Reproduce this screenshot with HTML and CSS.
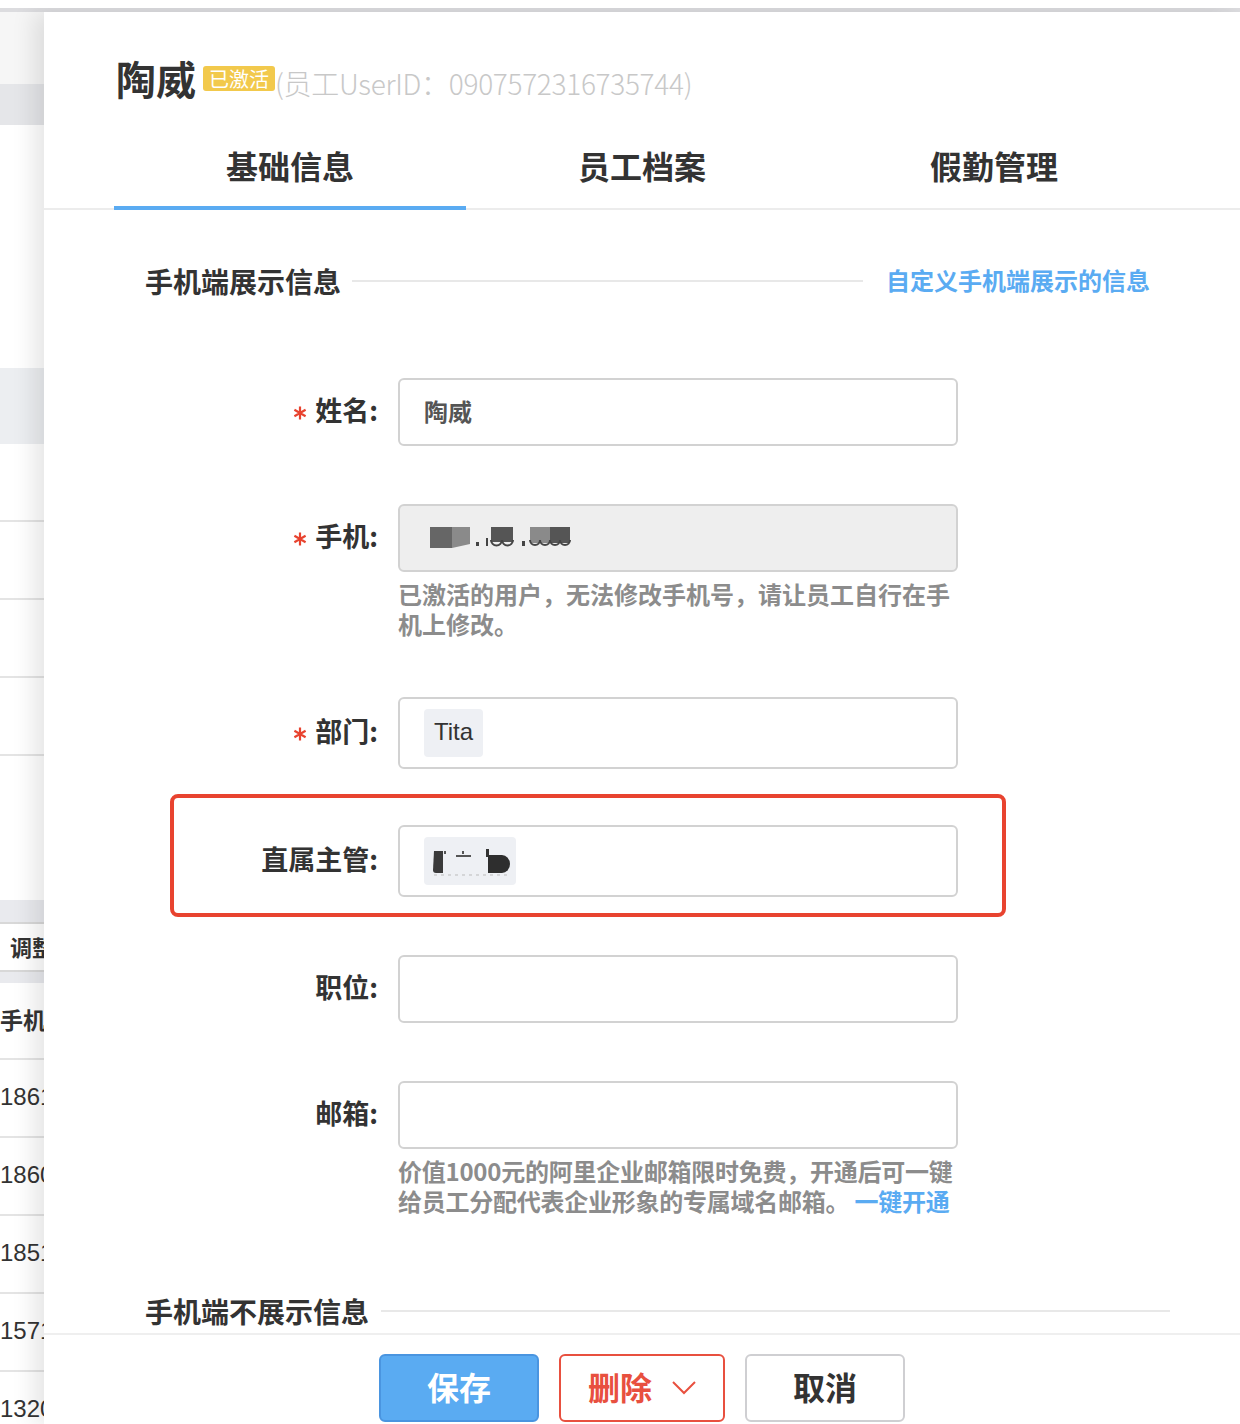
FILE: index.html
```html
<!DOCTYPE html>
<html lang="zh-CN">
<head>
<meta charset="utf-8">
<title>员工信息</title>
<link rel="stylesheet" href="styles.css">
</head>
<body>
<div class="topline"></div>
<div class="screen">
  <aside class="bg-list">
    <div class="l-top"></div>
    <div class="l-head"></div>
    <div class="l-space1"></div>
    <div class="l-sel"></div>
    <div class="l-row"></div>
    <div class="l-row"></div>
    <div class="l-row"></div>
    <div class="l-row"></div>
    <div class="l-space2"></div>
    <div class="l-band"></div>
    <div class="l-btnrow"><span class="l-btn">调整</span></div>
    <div class="l-band l-band--short"></div>
    <div class="l-row l-row--head">手机号码</div>
    <div class="l-row l-row--num">18612345678</div>
    <div class="l-row l-row--num">18600000000</div>
    <div class="l-row l-row--num">18512345678</div>
    <div class="l-row l-row--num">15712345678</div>
    <div class="l-row l-row--num">13200000000</div>
  </aside>

  <section class="panel">
    <header class="panel-head">
      <h1 class="emp-name">陶威</h1>
      <span class="badge">已激活</span>
      <span class="uid">(员工UserID：0907572316735744)</span>
    </header>

    <nav class="tabs">
      <div class="tab tab--active">基础信息</div>
      <div class="tab">员工档案</div>
      <div class="tab">假勤管理</div>
    </nav>

    <div class="panel-body">
      <div class="sec-head">
        <span class="sec-title">手机端展示信息</span>
        <span class="sec-line"></span>
        <a class="sec-link">自定义手机端展示的信息</a>
      </div>

      <div class="form">
        <div class="form-row">
          <label class="f-label"><svg class="req" width="14" height="14" viewBox="0 0 14 14"><path d="M7 0.5 V13.5 M1.4 3.75 L12.6 10.25 M1.4 10.25 L12.6 3.75" stroke="#e8432f" stroke-width="2.2"/></svg>姓名:</label>
          <div class="f-input">陶威</div>
        </div>

        <div class="form-row">
          <label class="f-label"><svg class="req" width="14" height="14" viewBox="0 0 14 14"><path d="M7 0.5 V13.5 M1.4 3.75 L12.6 10.25 M1.4 10.25 L12.6 3.75" stroke="#e8432f" stroke-width="2.2"/></svg>手机:</label>
          <div class="f-input f-input--disabled">
            <svg class="mosaic" width="150" height="26" viewBox="0 0 150 26">
              <rect x="0" y="1" width="22" height="21" fill="#666"/>
              <polygon points="22,1 40,1 40,18 22,22" fill="#8a8a8a"/>
              <rect x="46" y="16" width="3" height="4" fill="#444"/>
              <rect x="56" y="12" width="2" height="8" fill="#444"/>
              <rect x="61" y="1" width="12" height="15" fill="#555"/>
              <rect x="73" y="1" width="10" height="15" fill="#555"/>
              <path d="M61 14 a5 5 0 0 0 11 0 M72 14 a5 5 0 0 0 11 0" fill="none" stroke="#444" stroke-width="2"/>
              <rect x="92" y="15" width="3" height="5" fill="#444"/>
              <rect x="100" y="1" width="20" height="16" fill="#8a8a8a"/>
              <rect x="120" y="1" width="20" height="16" fill="#555"/>
              <path d="M100 14 a5 5 0 0 0 10 0 M110 14 a5 5 0 0 0 10 0 M120 14 a5 5 0 0 0 10 0 M130 14 a5 5 0 0 0 10 0" fill="none" stroke="#444" stroke-width="2"/>
            </svg>
          </div>
          <p class="f-hint">已激活的用户，无法修改手机号，请让员工自行在手机上修改。</p>
        </div>

        <div class="form-row">
          <label class="f-label"><svg class="req" width="14" height="14" viewBox="0 0 14 14"><path d="M7 0.5 V13.5 M1.4 3.75 L12.6 10.25 M1.4 10.25 L12.6 3.75" stroke="#e8432f" stroke-width="2.2"/></svg>部门:</label>
          <div class="f-input f-input--tall"><span class="tag">Tita</span></div>
        </div>

        <div class="highlight">
          <div class="form-row form-row--boxed">
            <label class="f-label">直属主管:</label>
            <div class="f-input f-input--tall">
              <span class="tag tag--blur">
                <svg width="80" height="36" viewBox="0 0 80 36">
                  <path d="M2 8 h9 v22 h-7 a3 3 0 0 1 -3 -3 z" fill="#3a3a3a"/>
                  <rect x="12" y="8" width="2" height="3" fill="#555"/>
                  <rect x="30" y="8" width="2" height="3" fill="#555"/>
                  <rect x="24" y="12" width="15" height="2" fill="#555"/>
                  <rect x="54" y="6" width="3" height="8" fill="#333"/>
                  <path d="M56 12 h14 a8 9 0 0 1 0 18 h-14 z" fill="#2e2e2e"/>
                  <path d="M2 32 h76" stroke="#bbb" stroke-width="1" stroke-dasharray="3 4"/>
                </svg>
              </span>
            </div>
          </div>
        </div>

        <div class="form-row form-row--after-box">
          <label class="f-label">职位:</label>
          <div class="f-input"></div>
        </div>

        <div class="form-row">
          <label class="f-label">邮箱:</label>
          <div class="f-input"></div>
          <p class="f-hint f-hint--tight">价值1000元的阿里企业邮箱限时免费，开通后可一键给员工分配代表企业形象的专属域名邮箱。 <a class="hint-link">一键开通</a></p>
        </div>
      </div>

      <div class="sec-head sec-head--plain">
        <span class="sec-title">手机端不展示信息</span>
        <span class="sec-line"></span>
      </div>
    </div>

    <footer class="panel-foot">
      <button class="btn btn--primary">保存</button>
      <button class="btn btn--danger">删除
        <svg class="chev" width="24" height="14" viewBox="0 0 24 14"><path d="M1 1 L12 12 L23 1" fill="none" stroke="#e8503f" stroke-width="2"/></svg>
      </button>
      <button class="btn btn--default">取消</button>
    </footer>
  </section>
</div>
</body>
</html>
```

FILE: styles.css
```css
* { box-sizing: border-box; }

html, body {
  margin: 0;
  padding: 0;
  background: #fff;
}

body {
  width: 1240px;
  height: 1424px;
  overflow: hidden;
  font-family: "Noto Sans CJK SC", "Noto Sans", sans-serif;
  color: #333;
  border-top: 8px solid #fff;
}

.topline {
  height: 4px;
  background: #dcdcdf;
}

.screen {
  display: flex;
  height: 1412px;
}

/* background list (left strip) */
.bg-list {
  width: 44px;
  flex: none;
  overflow: hidden;
  background: #fff;
  display: flex;
  flex-direction: column;
}

.l-top { height: 72px; background: #f6f6f6; flex: none; }
.l-head { height: 41px; background: #e5e6e9; flex: none; }
.l-space1 { height: 243px; flex: none; }
.l-sel { height: 76px; background: #eceef1; flex: none; }
.l-row {
  height: 78px;
  flex: none;
  border-bottom: 2px solid #e4e4e4;
  white-space: nowrap;
  display: flex;
  align-items: center;
}
.l-space2 { height: 144px; flex: none; }
.l-band { height: 22px; background: #e9eaee; flex: none; }
.l-band--short { height: 11px; }
.l-btnrow {
  height: 50px;
  flex: none;
  border-top: 2px solid #d8d8d8;
  border-bottom: 2px solid #d8d8d8;
  display: flex;
  align-items: center;
  padding-left: 10px;
  padding-bottom: 3px;
  white-space: nowrap;
}
.l-btn {
  font-size: 22px;
  font-weight: 700;
  color: #333;
}
.l-row--head {
  height: 77px;
  font-size: 23px;
  font-weight: 700;
  color: #333;
  padding-bottom: 3px;
}
.l-row--num {
  font-family: "Liberation Sans", Arial, sans-serif;
  font-size: 24px;
  color: #333;
  padding-bottom: 3px;
}

/* panel */
.panel {
  flex: 1;
  display: flex;
  flex-direction: column;
  background: #fff;
  box-shadow: -10px 0 22px rgba(0, 0, 0, 0.10);
  height: 1412px;
}

.panel-head {
  height: 116px;
  flex: none;
  padding: 37px 0 0 72px;
  display: flex;
  align-items: center;
  align-content: flex-start;
  flex-wrap: wrap;
}

.emp-name {
  margin: 0;
  font-size: 40px;
  line-height: 48px;
  font-weight: 700;
  color: #333;
}

.badge {
  margin-left: 7px;
  height: 25px;
  line-height: 25px;
  padding: 0 6px;
  background: #f2c94c;
  color: #fff;
  font-size: 20px;
  border-radius: 3px;
}

.uid {
  font-size: 28px;
  font-weight: 300;
  color: #c8c8c8;
  line-height: 48px;
  margin-top: 10px;
  letter-spacing: -0.3px;
}

.tabs {
  height: 82px;
  flex: none;
  display: flex;
  padding-left: 70px;
  border-bottom: 2px solid #ececec;
}

.tab {
  width: 352px;
  height: 80px;
  line-height: 74px;
  text-align: center;
  font-size: 32px;
  font-weight: 700;
  color: #333;
  position: relative;
}

.tab--active::after {
  content: "";
  position: absolute;
  left: 0;
  right: 0;
  bottom: -2px;
  height: 4px;
  background: #5aabf2;
}

.panel-body {
  flex: 1;
  overflow: hidden;
  padding: 53px 70px 0 101px;
}

.sec-head {
  display: flex;
  align-items: center;
  height: 36px;
  padding-right: 20px;
}

.sec-title {
  font-size: 28px;
  font-weight: 700;
  line-height: 36px;
  color: #333;
  flex: none;
  margin-right: 11px;
}

.sec-line {
  flex: 1;
  height: 2px;
  background: #e8e8e8;
}

.sec-link {
  font-size: 24px;
  font-weight: 700;
  color: #5aabf2;
  flex: none;
  margin-left: 23px;
  margin-top: -4px;
}

.sec-head--plain {
  margin-top: 77px;
  padding-right: 0;
}

.sec-head--plain .sec-title { margin-right: 12px; }

.form {
  margin-top: 79px;
  display: flex;
  flex-direction: column;
}

.form-row {
  display: grid;
  grid-template-columns: 233px 560px;
  column-gap: 20px;
  margin-top: 58px;
}

.form-row:first-child { margin-top: 0; }

.form-row--boxed {
  grid-template-columns: 204px 560px;
  margin-top: 0;
}

.form-row--after-box { margin-top: 38px; }

.f-label {
  grid-column: 1;
  grid-row: 1;
  align-self: center;
  text-align: right;
  font-size: 27px;
  font-weight: 700;
  color: #333;
  white-space: nowrap;
  padding-bottom: 5px;
}

.req {
  display: inline-block;
  margin-right: 8px;
  vertical-align: middle;
  position: relative;
  top: -1px;
}

.f-input {
  grid-column: 2;
  grid-row: 1;
  height: 68px;
  border: 2px solid #d2d2d2;
  border-radius: 6px;
  padding: 0 24px 3px;
  display: flex;
  align-items: center;
  font-size: 24px;
  font-weight: 700;
  color: #555;
}

.f-input--disabled {
  background: #eeeeee;
  padding-left: 30px;
  padding-bottom: 0;
}

.f-input--tall { height: 72px; padding-bottom: 0; }

.mosaic { display: block; margin-top: 2px; }

.tag {
  height: 48px;
  padding: 0 10px 2px;
  background: #eef0f4;
  border-radius: 4px;
  display: flex;
  align-items: center;
  font-family: "Liberation Sans", Arial, sans-serif;
  font-size: 24px;
  font-weight: 400;
  color: #333;
}

.tag--blur { padding: 0 4px 0 8px; }
.tag--blur svg { display: block; }

.f-hint {
  grid-column: 2;
  grid-row: 2;
  margin: 7px 0 0;
  font-size: 24px;
  line-height: 30px;
  font-weight: 700;
  color: #8c8c8c;
}

.f-hint--tight { letter-spacing: -0.25px; }

.hint-link {
  color: #5aabf2;
  white-space: nowrap;
}

.highlight {
  margin-top: 25px;
  margin-left: 25px;
  width: 836px;
  border: 4px solid #e8432f;
  border-radius: 8px;
  padding: 27px 0 16px 0;
}

.panel-foot {
  height: 91px;
  flex: none;
  border-top: 2px solid #efefef;
  display: flex;
  justify-content: center;
  gap: 20px;
  padding-top: 19px;
  background: #fff;
}

.btn {
  width: 160px;
  height: 68px;
  border-radius: 6px;
  font-family: "Noto Sans CJK SC", "Noto Sans", sans-serif;
  font-size: 32px;
  font-weight: 700;
  display: flex;
  align-items: center;
  justify-content: center;
  padding: 0 0 4px;
  background: #fff;
}

.btn--primary {
  background: #5aabf2;
  border: 2px solid #4a95e0;
  color: #fff;
}

.btn--danger {
  width: 166px;
  border: 2px solid #e8503f;
  color: #e8503f;
  gap: 20px;
}

.chev { display: block; margin-top: 4px; }

.btn--default {
  border: 2px solid #cfcfd2;
  color: #333;
}
```
